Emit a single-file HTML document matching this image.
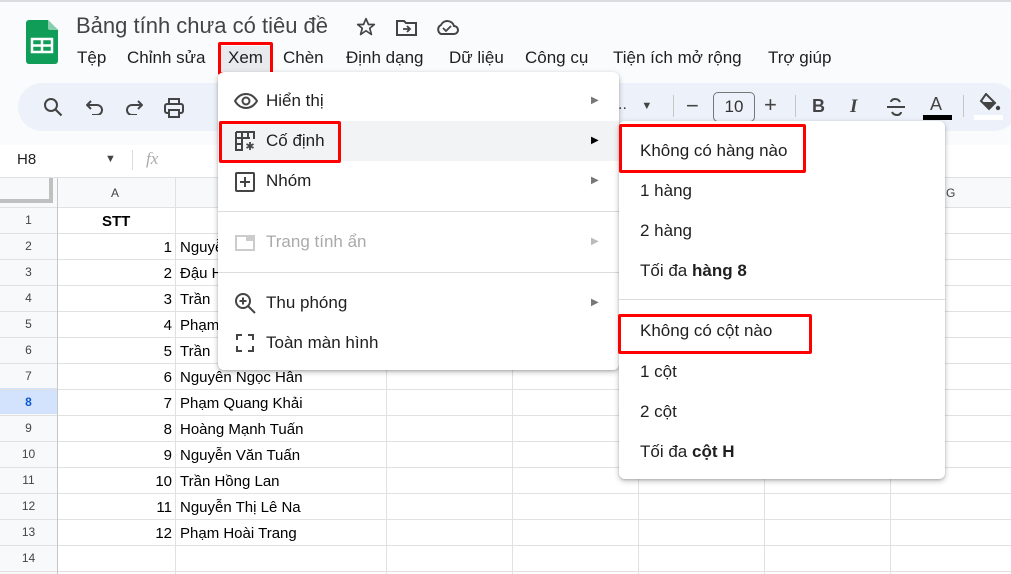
<!DOCTYPE html>
<html><head><meta charset="utf-8"><style>
*{margin:0;padding:0;box-sizing:border-box}
html,body{width:1011px;height:574px;overflow:hidden}
body{background:#fff;font-family:"Liberation Sans",Arial,sans-serif;color:#1f1f1f;position:relative}
.a{position:absolute}
.top{left:0;top:0;width:1011px;height:145px;background:#f9fbfd;border-top:2px solid #dadce0}
.menu span{position:absolute;top:48px;font-size:17px;color:#1f1f1f}
.tb{left:18px;top:83px;width:1000px;height:48px;background:#edf2fa;border-radius:24px}
.vl{top:178px;width:1px;background:#e1e1e1;height:396px}
.rn{left:0;width:57px;text-align:center;font-size:12px;color:#444}
.cell{font-size:15px;color:#000;line-height:26px;white-space:nowrap}
.pop{background:#fff;border-radius:6px;box-shadow:0 2px 6px rgba(0,0,0,.25),0 1px 2px rgba(0,0,0,.15)}
.mi{position:absolute;left:48px;font-size:17px;color:#1f1f1f}
.arr{position:absolute;left:373px;font-size:10px;color:#777}
.si{position:absolute;left:21px;font-size:17px;color:#1f1f1f}
.red{position:absolute;border:3px solid #f00;border-radius:2px}
</style></head><body>
<div class="a top"></div>
<svg class="a" style="left:26px;top:20px" width="32" height="44" viewBox="0 0 32 44"><path d="M3 0h19l10 10v31a3 3 0 0 1-3 3H3a3 3 0 0 1-3-3V3a3 3 0 0 1 3-3z" fill="#0f9d58"/><path d="M22 0l10 10h-8a2 2 0 0 1-2-2z" fill="#87ceac"/><rect x="6" y="19" width="20" height="13" fill="none" stroke="#fff" stroke-width="2.5"/><line x1="6" y1="25.5" x2="26" y2="25.5" stroke="#fff" stroke-width="2.5"/><line x1="16" y1="19" x2="16" y2="32" stroke="#fff" stroke-width="2.5"/></svg>
<div class="a" style="left:76px;top:13px;font-size:22px;color:#444">Bảng tính chưa có tiêu đề</div>
<svg class="a" style="left:356px;top:17px" width="20" height="20" viewBox="0 0 24 24"><path d="M12 2l3 7h7l-5.5 4.5 2 7.5L12 16.5 5.5 21l2-7.5L2 9h7z" fill="none" stroke="#444" stroke-width="2" stroke-linejoin="round"/></svg>
<svg class="a" style="left:396px;top:19px" width="22" height="18" viewBox="0 0 22 18"><path d="M1 2h7l2 2h10v12H1z" fill="none" stroke="#444" stroke-width="2"/><path d="M7 10h7M11 7l3 3-3 3" stroke="#444" stroke-width="1.8" fill="none"/></svg>
<svg class="a" style="left:435px;top:18px" width="24" height="18" viewBox="0 0 24 18"><path d="M6 16h13a4 4 0 0 0 0-8 7 7 0 0 0-13-1 5 5 0 0 0 0 9z" fill="none" stroke="#444" stroke-width="2"/><path d="M8 10l3 3 5-5" stroke="#444" stroke-width="1.8" fill="none"/></svg>
<div class="menu">
<span style="left:77px">Tệp</span><span style="left:127px">Chỉnh sửa</span><span style="left:283px">Chèn</span><span style="left:346px">Định dạng</span><span style="left:449px">Dữ liệu</span><span style="left:525px">Công cụ</span><span style="left:613px">Tiện ích mở rộng</span><span style="left:768px">Trợ giúp</span>
</div>
<div class="a" style="left:221px;top:46px;width:50px;height:26px;background:#e8eaed"></div>
<div class="red" style="left:218px;top:42px;width:55px;height:33px"></div>
<div class="a" style="left:228px;top:48px;font-size:17px">Xem</div>
<div class="a tb"></div>
<svg class="a" style="left:43px;top:97px" width="20" height="20" viewBox="0 0 20 20"><circle cx="8" cy="8" r="6" fill="none" stroke="#444" stroke-width="2"/><path d="M12.5 12.5l6 6" stroke="#444" stroke-width="2.2"/></svg>
<svg class="a" style="left:86px;top:99px" width="18" height="16" viewBox="0 0 18 16"><path d="M5 2L1 6l4 4M1 6h10a5 5 0 0 1 0 10H6" fill="none" stroke="#444" stroke-width="2"/></svg>
<svg class="a" style="left:125px;top:99px" width="18" height="16" viewBox="0 0 18 16"><path d="M13 2l4 4-4 4M17 6H7a5 5 0 0 0 0 10h5" fill="none" stroke="#444" stroke-width="2"/></svg>
<svg class="a" style="left:163px;top:98px" width="22" height="20" viewBox="0 0 22 20"><rect x="2" y="6" width="18" height="9" rx="2" fill="none" stroke="#444" stroke-width="2"/><rect x="6" y="1" width="10" height="5" fill="none" stroke="#444" stroke-width="2"/><rect x="6" y="12" width="10" height="7" fill="#edf2fa" stroke="#444" stroke-width="2"/></svg>
<div class="a" style="left:618px;top:96px;font-size:16px;color:#444">.. <span style="font-size:11px;margin-left:10px">▼</span></div>
<div class="a" style="left:673px;top:95px;width:1px;height:22px;background:#c7c7c7"></div>
<div class="a" style="left:686px;top:93px;font-size:22px;color:#444">−</div>
<div class="a" style="left:713px;top:92px;width:42px;height:30px;border:1px solid #777;border-radius:5px;text-align:center;font-size:17px;line-height:28px;color:#333">10</div>
<div class="a" style="left:764px;top:92px;font-size:22px;color:#444">+</div>
<div class="a" style="left:795px;top:95px;width:1px;height:22px;background:#c7c7c7"></div>
<div class="a" style="left:812px;top:96px;font-size:18px;font-weight:bold;color:#444">B</div>
<div class="a" style="left:850px;top:96px;font-size:19px;font-style:italic;font-weight:bold;color:#444;font-family:'Liberation Serif',serif">I</div>
<svg class="a" style="left:886px;top:97px" width="20" height="20" viewBox="0 0 20 20"><path d="M14 5c-1-2-3-3-5-3-3 0-4 2-4 3M6 15c1 2 3 3 5 3 3 0 4-2 4-3" fill="none" stroke="#444" stroke-width="2"/><path d="M1 10h18" stroke="#444" stroke-width="2"/></svg>
<div class="a" style="left:930px;top:94px;font-size:18px;color:#444">A</div>
<div class="a" style="left:923px;top:115px;width:29px;height:5px;background:#000"></div>
<div class="a" style="left:963px;top:95px;width:1px;height:22px;background:#c7c7c7"></div>
<svg class="a" style="left:978px;top:93px" width="24" height="20" viewBox="0 0 24 20"><path d="M8 1l9 9-6 6-8-8z" fill="none" stroke="#444" stroke-width="2"/><path d="M4 9h13l-6 6z" fill="#444"/><circle cx="20" cy="15" r="2.2" fill="#444"/></svg>
<div class="a" style="left:974px;top:115px;width:29px;height:5px;background:#fff"></div>
<div class="a" style="left:0;top:145px;width:1011px;height:33px;background:#fff;border-bottom:1px solid #e1e1e1"></div>
<div class="a" style="left:17px;top:151px;font-size:15px">H8</div>
<div class="a" style="left:105px;top:153px;font-size:11px;color:#444">▼</div>
<div class="a" style="left:132px;top:150px;width:1px;height:20px;background:#dadce0"></div>
<div class="a" style="left:146px;top:149px;font-size:17px;color:#aaa;font-style:italic;font-family:'Liberation Serif',serif">fx</div>
<div class="a" style="left:0;top:178px;width:1011px;height:29px;background:#f8f9fa"></div>
<div class="a" style="left:0;top:178px;width:57px;height:396px;background:#f8f9fa"></div>
<div class="a" style="left:0;top:388px;width:57px;height:26px;background:#d3e3fd"></div>
<div class="a" style="left:0;top:178px;width:53px;height:25px;background:#f8f9fa;border-right:4px solid #c0c0c0;border-bottom:4px solid #c0c0c0"></div>
<div class="a" style="left:0;top:207px;width:1011px;height:367px;background:repeating-linear-gradient(to bottom,#e1e1e1 0,#e1e1e1 1px,transparent 1px,transparent 26px)"></div>
<div class="a vl" style="left:57px;background:#c7c7c7"></div>
<div class="a vl" style="left:175px"></div><div class="a vl" style="left:386px"></div><div class="a vl" style="left:512px"></div><div class="a vl" style="left:638px"></div><div class="a vl" style="left:764px"></div><div class="a vl" style="left:890px"></div>
<div class="a" style="left:111px;top:186px;font-size:12px;color:#444">A</div>
<div class="a" style="left:946px;top:186px;font-size:12px;color:#444">G</div>
<div class="a rn" style="top:213px">1</div><div class="a rn" style="top:239px">2</div><div class="a rn" style="top:265px">3</div><div class="a rn" style="top:291px">4</div><div class="a rn" style="top:317px">5</div><div class="a rn" style="top:343px">6</div><div class="a rn" style="top:369px">7</div><div class="a rn" style="top:395px;font-weight:bold;color:#0b57d0">8</div><div class="a rn" style="top:421px">9</div><div class="a rn" style="top:447px">10</div><div class="a rn" style="top:473px">11</div><div class="a rn" style="top:499px">12</div><div class="a rn" style="top:525px">13</div><div class="a rn" style="top:551px">14</div>
<div class="a cell" style="left:102px;top:209px;font-weight:bold">STT</div>
<div class="a cell" style="left:100px;width:72px;text-align:right;top:235px">1<br>2<br>3<br>4<br>5<br>6<br>7<br>8<br>9<br>10<br>11<br>12</div>
<div class="a cell" style="left:180px;top:235px">Nguyễn<br>Đậu H<br>Trần<br>Phạm<br>Trần<br>Nguyên Ngọc Hân<br>Phạm Quang Khải<br>Hoàng Mạnh Tuấn<br>Nguyễn Văn Tuấn<br>Trần Hồng Lan<br>Nguyễn Thị Lê Na<br>Phạm Hoài Trang</div>
<div class="a pop" style="left:218px;top:72px;width:401px;height:298px">
 <svg class="a" style="left:16px;top:21px" width="24" height="16" viewBox="0 0 24 16"><path d="M1 8c3-5 7-7 11-7s8 2 11 7c-3 5-7 7-11 7S4 13 1 8z" fill="none" stroke="#444" stroke-width="2"/><circle cx="12" cy="8" r="3.5" fill="none" stroke="#444" stroke-width="2"/></svg>
 <div class="mi" style="top:19px">Hiển thị</div><div class="arr" style="top:23px">▶</div>
 <div class="a" style="left:0;top:49px;width:401px;height:40px;background:#f1f3f4"></div>
 <svg class="a" style="left:17px;top:59px" width="20" height="20" viewBox="0 0 20 20"><path d="M1 1h18v7M1 1v18h7M1 7h14M1 13h7M7 1v18M13 1v6" fill="none" stroke="#444" stroke-width="2"/><path d="M15 11v8M11.5 13l7 4M18.5 13l-7 4" stroke="#444" stroke-width="1.8"/></svg>
 <div class="mi" style="top:59px">Cố định</div><div class="arr" style="top:63px;color:#000">▶</div>
 <svg class="a" style="left:17px;top:100px" width="20" height="20" viewBox="0 0 20 20"><rect x="1" y="1" width="18" height="18" rx="1" fill="none" stroke="#444" stroke-width="2"/><path d="M10 5v10M5 10h10" stroke="#444" stroke-width="2"/></svg>
 <div class="mi" style="top:99px">Nhóm</div><div class="arr" style="top:103px">▶</div>
 <div class="a" style="left:0;top:139px;width:401px;height:1px;background:#dadce0"></div>
 <svg class="a" style="left:17px;top:163px" width="20" height="16" viewBox="0 0 20 16"><rect x="1" y="1" width="18" height="14" fill="none" stroke="#ccc" stroke-width="2"/><rect x="11" y="1" width="8" height="5" fill="#ccc"/></svg>
 <div class="mi" style="top:160px;color:#aaa">Trang tính ẩn</div><div class="arr" style="top:164px;color:#bbb">▶</div>
 <div class="a" style="left:0;top:200px;width:401px;height:1px;background:#dadce0"></div>
 <svg class="a" style="left:16px;top:220px" width="22" height="22" viewBox="0 0 22 22"><circle cx="9" cy="9" r="7" fill="none" stroke="#444" stroke-width="2"/><path d="M14 14l7 7M9 5.5v7M5.5 9h7" stroke="#444" stroke-width="2"/></svg>
 <div class="mi" style="top:221px">Thu phóng</div><div class="arr" style="top:225px">▶</div>
 <svg class="a" style="left:18px;top:262px" width="18" height="18" viewBox="0 0 18 18"><path d="M1 6V1h5M12 1h5v5M17 12v5h-5M6 17H1v-5" fill="none" stroke="#444" stroke-width="2"/></svg>
 <div class="mi" style="top:261px">Toàn màn hình</div>
</div>
<div class="red" style="left:219px;top:121px;width:122px;height:42px"></div>
<div class="a pop" style="left:619px;top:121px;width:326px;height:358px">
 <div class="si" style="top:20px">Không có hàng nào</div>
 <div class="si" style="top:60px">1 hàng</div>
 <div class="si" style="top:100px">2 hàng</div>
 <div class="si" style="top:140px">Tối đa <b>hàng 8</b></div>
 <div class="a" style="left:0;top:178px;width:326px;height:1px;background:#dadce0"></div>
 <div class="si" style="top:200px">Không có cột nào</div>
 <div class="si" style="top:241px">1 cột</div>
 <div class="si" style="top:281px">2 cột</div>
 <div class="si" style="top:321px">Tối đa <b>cột H</b></div>
</div>
<div class="red" style="left:619px;top:124px;width:187px;height:49px"></div>
<div class="red" style="left:618px;top:314px;width:194px;height:40px"></div>
</body></html>
